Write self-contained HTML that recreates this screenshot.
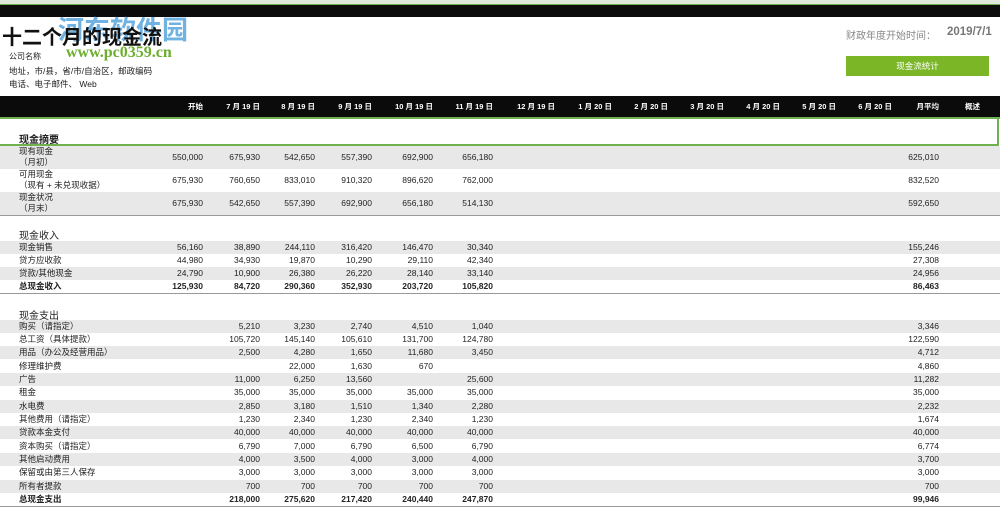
<!DOCTYPE html><html><head><meta charset="utf-8"><style>
body{margin:0;width:1000px;height:509px;overflow:hidden;background:#fff;font-family:"Liberation Sans","Noto Sans CJK SC",sans-serif;color:#222;position:relative}
div,span{position:absolute;white-space:nowrap}
.r{left:0;width:1000px;height:13px;font-size:8.5px;line-height:13px}
.g{background:#e8e8e8}
.b{font-weight:bold}
.r span{top:0}
.l{left:19px}
.c0{right:797px}.c1{right:740px}.c2{right:685px}.c3{right:628px}.c4{right:567px}.c5{right:507px}.c6{right:445px}.c7{right:388px}.c8{right:332px}.c9{right:276px}.c10{right:220px}.c11{right:164px}.c12{right:108px}.c13{right:61px}.c14{right:20px}
.t{height:23px;line-height:12px}
.t span{top:5px}
.t .l{top:0;line-height:11px}
.sec{left:19px;font-size:10px;font-weight:bold}
</style></head><body>
<div style="left:0;top:0;width:1000px;height:4px;background:#dfe6dc;border-bottom:1px solid #6fb04f"></div>
<div style="left:0;top:5px;width:1000px;height:12px;background:#0b0b0b"></div>
<div style="left:58px;top:10px;font-size:26px;font-weight:bold;color:#4da0dc;opacity:.8">河东软件园</div>
<div style="left:2px;top:21px;font-size:20px;font-weight:bold;color:#111">十二个月的现金流</div>
<div style="left:66px;top:44px;font-size:16px;font-weight:bold;color:#6cae2e;font-family:'Liberation Serif',serif">www.pc0359.cn</div>
<div style="left:9px;top:51px;font-size:8px">公司名称</div>
<div style="left:9px;top:65px;font-size:8.5px">地址，市/县，省/市/自治区，邮政编码</div>
<div style="left:9px;top:78px;font-size:8.5px">电话、电子邮件、 Web</div>
<div style="left:846px;top:27px;font-size:10px;color:#888">财政年度开始时间：</div>
<div style="left:947px;top:26px;font-size:11.5px;color:#777;font-weight:bold">2019/7/1</div>
<div style="left:846px;top:56px;width:143px;height:20px;background:#7bb627;color:#fff;font-size:8.5px;line-height:20px;text-align:center">现金流统计</div>
<div class="r b" style="top:96px;height:21px;line-height:21px;background:#0b0b0b;color:#fff;font-size:7.5px">
<span class="c0">开始</span><span class="c1">7 月 19 日</span><span class="c2">8 月 19 日</span><span class="c3">9 月 19 日</span><span class="c4">10 月 19 日</span><span class="c5">11 月 19 日</span><span class="c6">12 月 19 日</span><span class="c7">1 月 20 日</span><span class="c8">2 月 20 日</span><span class="c9">3 月 20 日</span><span class="c10">4 月 20 日</span><span class="c11">5 月 20 日</span><span class="c12">6 月 20 日</span><span class="c13">月平均</span><span class="c14">概述</span></div>
<div style="left:0;top:117px;width:1000px;height:2px;background:#6fb04f"></div>
<div style="left:0;top:119px;width:997px;height:25px;border-right:2px solid #6fb04f;border-bottom:2px solid #6fb04f"></div>
<div class="sec" style="top:131px">现金摘要</div>
<div class="r t g" style="top:146px"><span class="l">现有现金<br>（月初）</span><span class="c0">550,000</span><span class="c1">675,930</span><span class="c2">542,650</span><span class="c3">557,390</span><span class="c4">692,900</span><span class="c5">656,180</span><span class="c13">625,010</span></div>
<div class="r t" style="top:169px"><span class="l">可用现金<br>（现有 + 未兑现收据）</span><span class="c0">675,930</span><span class="c1">760,650</span><span class="c2">833,010</span><span class="c3">910,320</span><span class="c4">896,620</span><span class="c5">762,000</span><span class="c13">832,520</span></div>
<div class="r t g" style="top:192px;border-bottom:1px solid #999"><span class="l">现金状况<br>（月末）</span><span class="c0">675,930</span><span class="c1">542,650</span><span class="c2">557,390</span><span class="c3">692,900</span><span class="c4">656,180</span><span class="c5">514,130</span><span class="c13">592,650</span></div>
<div class="sec" style="top:227px;font-weight:normal">现金收入</div>
<div class="r g" style="top:241px"><span class="l">现金销售</span><span class="c0">56,160</span><span class="c1">38,890</span><span class="c2">244,110</span><span class="c3">316,420</span><span class="c4">146,470</span><span class="c5">30,340</span><span class="c13">155,246</span></div>
<div class="r" style="top:254px"><span class="l">贷方应收款</span><span class="c0">44,980</span><span class="c1">34,930</span><span class="c2">19,870</span><span class="c3">10,290</span><span class="c4">29,110</span><span class="c5">42,340</span><span class="c13">27,308</span></div>
<div class="r g" style="top:267px"><span class="l">贷款/其他现金</span><span class="c0">24,790</span><span class="c1">10,900</span><span class="c2">26,380</span><span class="c3">26,220</span><span class="c4">28,140</span><span class="c5">33,140</span><span class="c13">24,956</span></div>
<div class="r b" style="top:280px;border-bottom:1px solid #999"><span class="l">总现金收入</span><span class="c0">125,930</span><span class="c1">84,720</span><span class="c2">290,360</span><span class="c3">352,930</span><span class="c4">203,720</span><span class="c5">105,820</span><span class="c13">86,463</span></div>
<div class="sec" style="top:307px;font-weight:normal">现金支出</div>
<div class="r g" style="top:320px"><span class="l">购买（请指定）</span><span class="c1">5,210</span><span class="c2">3,230</span><span class="c3">2,740</span><span class="c4">4,510</span><span class="c5">1,040</span><span class="c13">3,346</span></div>
<div class="r" style="top:333px"><span class="l">总工资（具体提款）</span><span class="c1">105,720</span><span class="c2">145,140</span><span class="c3">105,610</span><span class="c4">131,700</span><span class="c5">124,780</span><span class="c13">122,590</span></div>
<div class="r g" style="top:346px"><span class="l">用品（办公及经营用品）</span><span class="c1">2,500</span><span class="c2">4,280</span><span class="c3">1,650</span><span class="c4">11,680</span><span class="c5">3,450</span><span class="c13">4,712</span></div>
<div class="r" style="top:360px"><span class="l">修理维护费</span><span class="c2">22,000</span><span class="c3">1,630</span><span class="c4">670</span><span class="c13">4,860</span></div>
<div class="r g" style="top:373px"><span class="l">广告</span><span class="c1">11,000</span><span class="c2">6,250</span><span class="c3">13,560</span><span class="c5">25,600</span><span class="c13">11,282</span></div>
<div class="r" style="top:386px"><span class="l">租金</span><span class="c1">35,000</span><span class="c2">35,000</span><span class="c3">35,000</span><span class="c4">35,000</span><span class="c5">35,000</span><span class="c13">35,000</span></div>
<div class="r g" style="top:400px"><span class="l">水电费</span><span class="c1">2,850</span><span class="c2">3,180</span><span class="c3">1,510</span><span class="c4">1,340</span><span class="c5">2,280</span><span class="c13">2,232</span></div>
<div class="r" style="top:413px"><span class="l">其他费用（请指定）</span><span class="c1">1,230</span><span class="c2">2,340</span><span class="c3">1,230</span><span class="c4">2,340</span><span class="c5">1,230</span><span class="c13">1,674</span></div>
<div class="r g" style="top:426px"><span class="l">贷款本金支付</span><span class="c1">40,000</span><span class="c2">40,000</span><span class="c3">40,000</span><span class="c4">40,000</span><span class="c5">40,000</span><span class="c13">40,000</span></div>
<div class="r" style="top:440px"><span class="l">资本购买（请指定）</span><span class="c1">6,790</span><span class="c2">7,000</span><span class="c3">6,790</span><span class="c4">6,500</span><span class="c5">6,790</span><span class="c13">6,774</span></div>
<div class="r g" style="top:453px"><span class="l">其他启动费用</span><span class="c1">4,000</span><span class="c2">3,500</span><span class="c3">4,000</span><span class="c4">3,000</span><span class="c5">4,000</span><span class="c13">3,700</span></div>
<div class="r" style="top:466px"><span class="l">保留或由第三人保存</span><span class="c1">3,000</span><span class="c2">3,000</span><span class="c3">3,000</span><span class="c4">3,000</span><span class="c5">3,000</span><span class="c13">3,000</span></div>
<div class="r g" style="top:480px"><span class="l">所有者提款</span><span class="c1">700</span><span class="c2">700</span><span class="c3">700</span><span class="c4">700</span><span class="c5">700</span><span class="c13">700</span></div>
<div class="r b" style="top:493px;border-bottom:1px solid #999"><span class="l">总现金支出</span><span class="c1">218,000</span><span class="c2">275,620</span><span class="c3">217,420</span><span class="c4">240,440</span><span class="c5">247,870</span><span class="c13">99,946</span></div>
</body></html>
